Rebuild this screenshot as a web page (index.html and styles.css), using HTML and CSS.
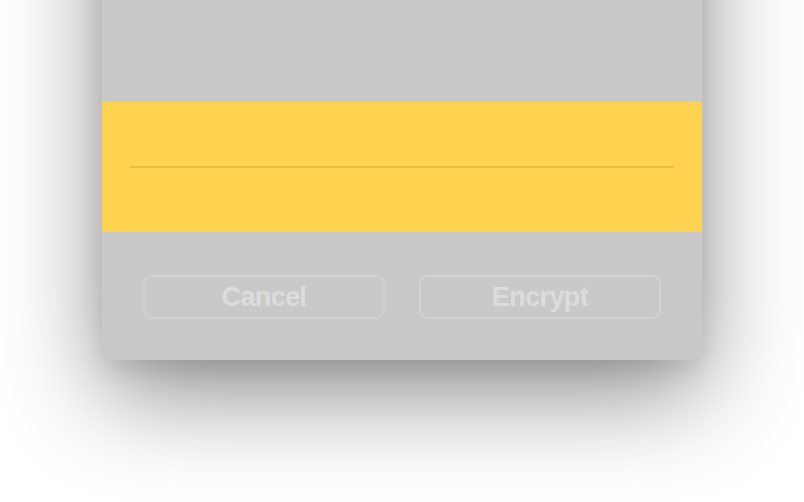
FILE: index.html
```html
<!DOCTYPE html>
<html>
<head>
<meta charset="utf-8">
<link rel="stylesheet" href="styles.css">
</head>
<body>
<div class="stage">
  <div class="dialog">
    <div class="dialog-top"></div>
    <div class="field-band">
      <div class="field-line"></div>
    </div>
    <div class="actions">
      <button class="btn">Cancel</button>
      <button class="btn">Encrypt</button>
    </div>
  </div>
</div>
</body>
</html>
```
FILE: styles.css
```css
html, body {
  margin: 0;
  padding: 0;
  background: #ffffff;
  width: 804px;
  height: 502px;
  overflow: hidden;
}
.stage {
  display: flex;
  justify-content: center;
}
.dialog {
  width: 600px;
  margin-top: -200px;
  background: #c9c9c9;
  border-radius: 13px;
  box-shadow: 0 34px 100px rgba(0, 0, 0, 0.45), 0 12px 24px rgba(0, 0, 0, 0.08);
  display: flex;
  flex-direction: column;
}
.dialog-top {
  height: 302px;
}
.field-band {
  height: 130px;
  background: #ffd250;
  padding: 64px 28px 0 28px;
  box-sizing: border-box;
}
.field-line {
  height: 2px;
  background: #e8bd49;
}
.actions {
  display: flex;
  gap: 34px;
  padding: 43px 41px 41px 41px;
}
.btn {
  flex: 1;
  height: 44px;
  border: 2px solid #d3d3d3;
  border-radius: 9px;
  background: transparent;
  color: #dcdcdc;
  font-family: "Liberation Sans", Arial, sans-serif;
  font-weight: bold;
  font-size: 27px;
  letter-spacing: -0.6px;
  padding: 0;
  line-height: 40px;
}
```
